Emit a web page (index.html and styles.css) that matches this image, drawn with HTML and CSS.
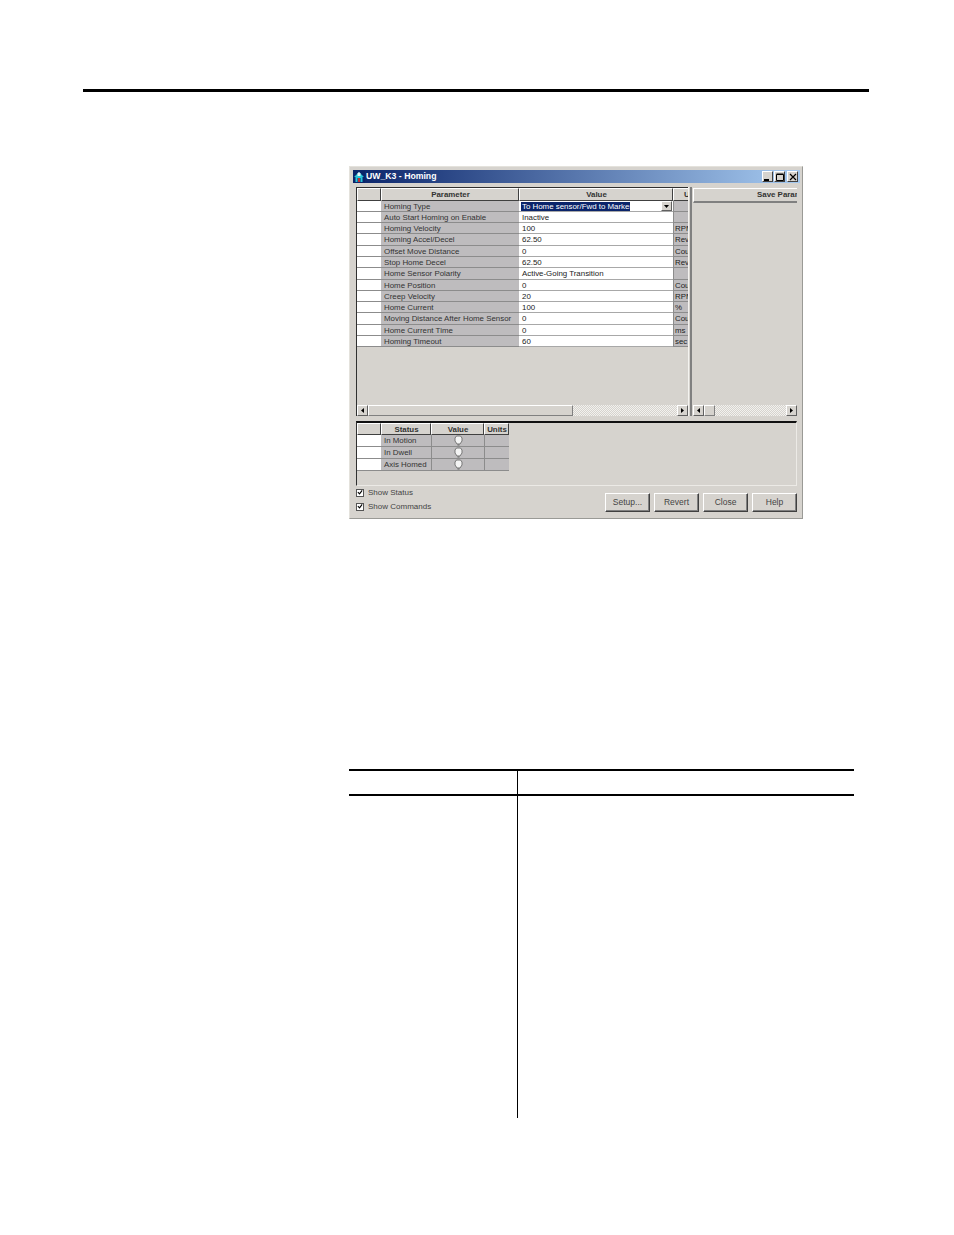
FILE: index.html
```html
<html>
  <head>
    <title>UW_K3 - Homing</title>
    <link rel="stylesheet" href="styles.css">
  </head>
  <body>
    <div class="top-rule"></div>

    <div class="window">
      <div class="titlebar">
        <svg class="app-icon" width="12" height="12" viewBox="0 0 12 12">
          <rect width="12" height="12" fill="#0a246a" />
          <path d="M1 6 L6 1 L11 6 L9.5 6 L9.5 11 L7.5 11 L7.5 7 L4.5 7 L4.5 11 L2.5 11 L2.5 6 Z" fill="#29c4d8" />
          <path d="M6 1 L7.5 2.5 L7.5 5 L4.5 5 L4.5 2.5 Z" fill="#e8f4f8" />
          <rect x="5" y="7" width="2" height="4" fill="#c03030" />
        </svg>
        <span class="title">UW_K3 - Homing</span>
        <div class="win-buttons">
          <div class="win-btn">
            <svg width="9" height="9" viewBox="0 0 9 9"><rect x="1" y="7" width="5" height="2" fill="#000" /></svg>
          </div>
          <div class="win-btn max">
            <svg width="8" height="8" viewBox="0 0 8 8"><path d="M0.5 1.5 H7.5 V7.5 H0.5 Z M0.5 1 H7.5" fill="none" stroke="#000" /></svg>
          </div>
          <div class="win-btn close">
            <svg width="8" height="8" viewBox="0 0 8 8"><path d="M1 1 L7 7 M7 1 L1 7" stroke="#000" stroke-width="1.2" /></svg>
          </div>
        </div>
      </div>

      <div class="panes">
        <div class="pane-left">
          <div class="param-grid">
            <div class="head"></div>
            <div class="head">Parameter</div>
            <div class="head">Value</div>
            <div class="head clip">Units</div>

            <div class="sel"></div><div class="name">Homing Type</div>
            <div class="val editing">
              <span class="highlight">To Home sensor/Fwd to Marker</span>
              <span class="combo-btn"><svg width="5" height="3" viewBox="0 0 5 3"><path d="M0 0 H5 L2.5 3 Z" fill="#000" /></svg></span>
            </div>
            <div class="unit"></div>

            <div class="sel"></div><div class="name">Auto Start Homing on Enable</div><div class="val">Inactive</div><div class="unit"></div>
            <div class="sel"></div><div class="name">Homing Velocity</div><div class="val">100</div><div class="unit">RPM</div>
            <div class="sel"></div><div class="name">Homing Accel/Decel</div><div class="val">62.50</div><div class="unit">Rev</div>
            <div class="sel"></div><div class="name">Offset Move Distance</div><div class="val">0</div><div class="unit">Cou</div>
            <div class="sel"></div><div class="name">Stop Home Decel</div><div class="val">62.50</div><div class="unit">Rev</div>
            <div class="sel"></div><div class="name">Home Sensor Polarity</div><div class="val">Active-Going Transition</div><div class="unit"></div>
            <div class="sel"></div><div class="name">Home Position</div><div class="val">0</div><div class="unit">Cou</div>
            <div class="sel"></div><div class="name">Creep Velocity</div><div class="val">20</div><div class="unit">RPM</div>
            <div class="sel"></div><div class="name">Home Current</div><div class="val">100</div><div class="unit">%</div>
            <div class="sel"></div><div class="name">Moving Distance After Home Sensor</div><div class="val">0</div><div class="unit">Cou</div>
            <div class="sel"></div><div class="name">Home Current Time</div><div class="val">0</div><div class="unit">ms</div>
            <div class="sel"></div><div class="name">Homing Timeout</div><div class="val">60</div><div class="unit">sec</div>
          </div>
          <div class="scrollbar">
            <div class="sb-btn"><svg width="3" height="5" viewBox="0 0 3 5"><path d="M3 0 V5 L0 2.5 Z" /></svg></div>
            <div class="sb-thumb long"></div>
            <div class="sb-track"></div>
            <div class="sb-btn"><svg width="3" height="5" viewBox="0 0 3 5"><path d="M0 0 V5 L3 2.5 Z" /></svg></div>
          </div>
        </div>

        <div class="splitter"></div>

        <div class="pane-right">
          <div class="save-head">Save Parameters</div>
          <div class="save-body"></div>
          <div class="scrollbar">
            <div class="sb-btn"><svg width="3" height="5" viewBox="0 0 3 5"><path d="M3 0 V5 L0 2.5 Z" /></svg></div>
            <div class="sb-thumb"></div>
            <div class="sb-track"></div>
            <div class="sb-btn"><svg width="3" height="5" viewBox="0 0 3 5"><path d="M0 0 V5 L3 2.5 Z" /></svg></div>
          </div>
        </div>
      </div>

      <div class="status-panel">
        <div class="status-grid">
          <div class="head"></div>
          <div class="head">Status</div>
          <div class="head">Value</div>
          <div class="head">Units</div>

          <div class="sel"></div><div class="name">In Motion</div>
          <div class="led-cell"><svg width="9" height="11" viewBox="0 0 9 11"><path d="M2.5 1 H6.5 L8 3 V6 L6 9 H3 L1 6 V3 Z" fill="#f4f4f4" stroke="#777" /><path d="M3.5 10 H5.5" stroke="#666" /></svg></div>
          <div class="unit"></div>

          <div class="sel"></div><div class="name">In Dwell</div>
          <div class="led-cell"><svg width="9" height="11" viewBox="0 0 9 11"><path d="M2.5 1 H6.5 L8 3 V6 L6 9 H3 L1 6 V3 Z" fill="#f4f4f4" stroke="#777" /><path d="M3.5 10 H5.5" stroke="#666" /></svg></div>
          <div class="unit"></div>

          <div class="sel"></div><div class="name">Axis Homed</div>
          <div class="led-cell"><svg width="9" height="11" viewBox="0 0 9 11"><path d="M2.5 1 H6.5 L8 3 V6 L6 9 H3 L1 6 V3 Z" fill="#f4f4f4" stroke="#777" /><path d="M3.5 10 H5.5" stroke="#666" /></svg></div>
          <div class="unit"></div>
        </div>
      </div>

      <div class="footer">
        <div class="checks">
          <label class="check"><span class="box"><svg width="7" height="7" viewBox="0 0 7 7"><path d="M1 3 L3 5 L6 1" fill="none" stroke="#000" stroke-width="1.3" /></svg></span>Show Status</label>
          <label class="check"><span class="box"><svg width="7" height="7" viewBox="0 0 7 7"><path d="M1 3 L3 5 L6 1" fill="none" stroke="#000" stroke-width="1.3" /></svg></span>Show Commands</label>
        </div>
        <div class="buttons">
          <div class="btn">Setup...</div>
          <div class="btn">Revert</div>
          <div class="btn">Close</div>
          <div class="btn">Help</div>
        </div>
      </div>
    </div>

    <div class="doc-table">
      <div class="doc-head">
        <div class="doc-col-a"></div>
        <div class="doc-col-b"></div>
      </div>
      <div class="doc-body">
        <div class="doc-col-a"></div>
        <div class="doc-col-b"></div>
      </div>
    </div>
  </body>
</html>
```

FILE: styles.css
```css
html {
  background: #fff;
}

body {
  margin: 0;
  padding-top: 89px;
  font: 7.9px "Liberation Sans", Arial, sans-serif;
  color: #333;
}

.top-rule {
  width: 786px;
  height: 3px;
  margin-left: 83px;
  background: #000;
}

/* dialog */
.window {
  width: 454px;
  height: 353px;
  margin: 74px 0 0 349px;
  box-sizing: border-box;
  padding: 3px 2px 0 3px;
  background: #d6d3ce;
  border: 1px solid #e4e2dc;
  border-right-color: #9a9a96;
  border-bottom-color: #9a9a96;
  display: flex;
  flex-direction: column;
}

.titlebar {
  height: 13px;
  display: flex;
  align-items: center;
  background: linear-gradient(to right, #0a246a, #a6caf0);
  color: #fff;
  flex-shrink: 0;
}
.app-icon {
  margin-right: 1px;
}
.title {
  font-size: 8.7px;
  font-weight: bold;
  margin-bottom: 1px;
}
.win-buttons {
  margin-left: auto;
  margin-right: 2px;
  display: flex;
}
.win-btn {
  width: 11px;
  height: 11px;
  box-sizing: border-box;
  background: #d6d3ce;
  border: 1px solid;
  border-color: #fff #404040 #404040 #fff;
  display: flex;
  align-items: center;
  justify-content: center;
}
.win-btn.max {
  margin-left: 1px;
}
.win-btn.close {
  margin-left: 2px;
}

.panes {
  display: flex;
  height: 229px;
  margin: 4px 3px 0 3px;
  flex-shrink: 0;
}
.pane-left {
  width: 332px;
  box-sizing: border-box;
  border-left: 1px solid #303030;
  border-top: 1px solid #303030;
  display: flex;
  flex-direction: column;
}
.splitter {
  width: 4px;
  box-sizing: border-box;
  border-left: 1px solid #f4f3f0;
  border-right: 2px solid #808080;
}
.pane-right {
  flex: 1;
  min-width: 0;
  margin-left: 1px;
  display: flex;
  flex-direction: column;
}

.param-grid,
.status-grid {
  display: grid;
}
.param-grid {
  grid-template-columns: 24px 138px 154px 15px;
  grid-template-rows: 12.7px repeat(13, 11.28px);
  height: 217px;
  align-content: start;
  overflow: hidden;
}
.status-grid {
  width: 152px;
  grid-template-columns: 24px 50px 53px 25px;
  grid-auto-rows: 12px;
}

.head {
  background: #d6d3ce;
  border-left: 1px solid #fff;
  border-top: 1px solid #fff;
  border-right: 1px solid #404040;
  border-bottom: 1px solid #404040;
  box-sizing: border-box;
  padding-left: 1px;
  text-align: center;
  font-weight: bold;
  color: #333;
  line-height: 11px;
  overflow: hidden;
  white-space: nowrap;
}
.head.clip {
  border-right: 0;
  padding-left: 10px;
  text-align: left;
}

.sel {
  background: #fff;
  border-bottom: 1px solid #8c8c8c;
  box-sizing: border-box;
}
.name,
.unit {
  background: #bebcbe;
  border-bottom: 1px solid #8c8c8c;
  box-sizing: border-box;
  padding: 1px 0 0 3px;
  line-height: 10px;
  white-space: nowrap;
  overflow: hidden;
}
.unit {
  padding-left: 1px;
  border-left: 1px solid #8c8c8c;
  color: #222;
}
.val {
  background: #fff;
  border-bottom: 1px solid #a8a8a8;
  box-sizing: border-box;
  padding: 1px 0 0 3px;
  line-height: 10px;
  white-space: nowrap;
  overflow: hidden;
  color: #222;
}
.val.editing {
  display: flex;
  align-items: center;
  padding: 1px 0 0 2px;
}
.highlight {
  background: #0a246a;
  color: #fff;
  width: 108px;
  padding-left: 1px;
  overflow: hidden;
  line-height: 9px;
}
.combo-btn {
  margin-left: auto;
  margin-right: 1px;
  width: 11px;
  height: 10px;
  background: #d6d3ce;
  border: 1px solid;
  border-color: #fff #606060 #606060 #fff;
  box-sizing: border-box;
  display: flex;
  align-items: center;
  justify-content: center;
}

/* scrollbars */
.scrollbar {
  height: 11px;
  display: flex;
  flex-shrink: 0;
}
.sb-btn {
  width: 11px;
  box-sizing: border-box;
  background: #d6d3ce;
  border: 1px solid;
  border-color: #fff #606060 #606060 #fff;
  display: flex;
  align-items: center;
  justify-content: center;
}
.sb-thumb {
  width: 11px;
  box-sizing: border-box;
  background: #d6d3ce;
  border: 1px solid;
  border-color: #fff #808080 #808080 #fff;
}
.sb-thumb.long {
  width: 205px;
}
.sb-track {
  flex: 1;
  background: repeating-conic-gradient(#d6d3ce 0 25%, #f2f1ee 0 50%) 0 0 / 2px 2px;
}

.save-head {
  height: 15px;
  margin-top: 1px;
  padding-left: 63px;
  box-sizing: border-box;
  background: #d6d3ce;
  border-top: 1px solid #fff;
  border-left: 1px solid #fff;
  border-bottom: 2px solid #808080;
  font-weight: bold;
  color: #333;
  line-height: 11px;
  white-space: nowrap;
  overflow: hidden;
}
.save-body {
  flex: 1;
}

/* status */
.status-panel {
  height: 65px;
  margin: 5px 3px 0 3px;
  box-sizing: border-box;
  border-top: 2px solid #111;
  border-left: 1px solid #303030;
  border-bottom: 1px solid #eceae6;
  border-right: 1px solid #eceae6;
  flex-shrink: 0;
}
.led-cell {
  background: #bebcbe;
  border-bottom: 1px solid #8c8c8c;
  border-left: 1px solid #8c8c8c;
  box-sizing: border-box;
  display: flex;
  align-items: center;
  justify-content: center;
}

/* footer */
.footer {
  flex: 1;
  display: flex;
  justify-content: space-between;
  padding: 1px 3px 0 3px;
}
.checks {
  display: flex;
  flex-direction: column;
  gap: 5px;
  padding-top: 1px;
}
.check {
  display: flex;
  align-items: center;
  font-size: 8px;
  height: 9px;
  color: #444;
}
.box {
  width: 8px;
  height: 8px;
  box-sizing: border-box;
  background: #fff;
  border: 1px solid #555;
  margin-right: 4px;
  display: flex;
  align-items: center;
  justify-content: center;
}
.buttons {
  display: flex;
  gap: 4px;
  padding-top: 6px;
}
.btn {
  width: 45px;
  height: 19px;
  box-sizing: border-box;
  background: #d6d3ce;
  border: 1px solid;
  border-color: #fff #404040 #404040 #fff;
  box-shadow: inset -1px -1px 0 #808080;
  text-align: center;
  font-size: 8.5px;
  line-height: 16px;
  color: #444;
}

/* empty table below the dialog */
.doc-table {
  width: 505px;
  margin: 250px 0 0 349px;
}
.doc-head,
.doc-body {
  display: flex;
}
.doc-head {
  height: 23px;
  border-top: 2px solid #000;
  border-bottom: 2px solid #000;
}
.doc-body {
  height: 322px;
}
.doc-col-a {
  width: 169px;
  box-sizing: border-box;
  border-right: 1px solid #000;
}
.doc-col-b {
  flex: 1;
}
```
